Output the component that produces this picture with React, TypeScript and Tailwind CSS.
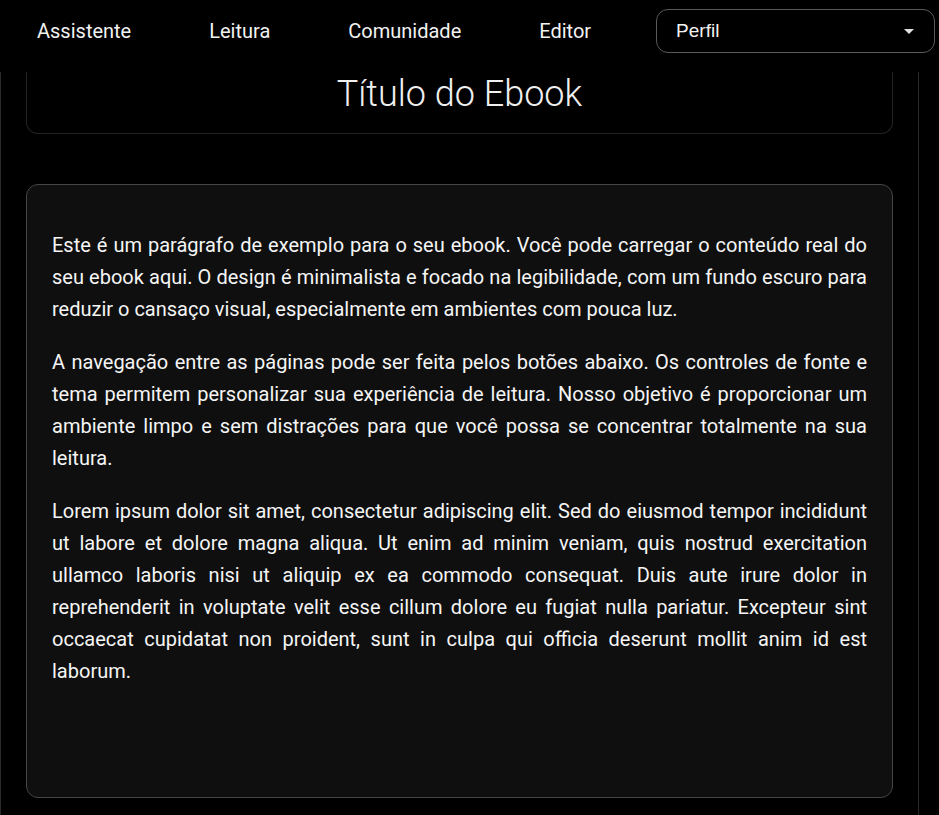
const NAV_LINKS = ["Assistente", "Leitura", "Comunidade", "Editor"];

const PARAGRAPHS = [
	"Este é um parágrafo de exemplo para o seu ebook. Você pode carregar o conteúdo real do seu ebook aqui. O design é minimalista e focado na legibilidade, com um fundo escuro para reduzir o cansaço visual, especialmente em ambientes com pouca luz.",
	"A navegação entre as páginas pode ser feita pelos botões abaixo. Os controles de fonte e tema permitem personalizar sua experiência de leitura. Nosso objetivo é proporcionar um ambiente limpo e sem distrações para que você possa se concentrar totalmente na sua leitura.",
	"Lorem ipsum dolor sit amet, consectetur adipiscing elit. Sed do eiusmod tempor incididunt ut labore et dolore magna aliqua. Ut enim ad minim veniam, quis nostrud exercitation ullamco laboris nisi ut aliquip ex ea commodo consequat. Duis aute irure dolor in reprehenderit in voluptate velit esse cillum dolore eu fugiat nulla pariatur. Excepteur sint occaecat cupidatat non proident, sunt in culpa qui officia deserunt mollit anim id est laborum.",
];

function Header() {
	return (
		<header className="h-[72px] bg-black flex items-start pt-[9px]">
			<nav className="flex items-center h-[44px] pl-[37px] gap-[78px]">
				{NAV_LINKS.map((label) => (
					<a key={label} className="text-[20px] font-normal text-[#f2f2f2]">
						{label}
					</a>
				))}
			</nav>
			<div className="ml-[65px] w-[279px] h-[44px] rounded-[12px] border border-[#5a5a5a] flex items-center justify-between pl-[19px] pr-[20px] font-['Liberation_Sans',sans-serif] text-[19px] text-[#f2f2f2]">
				<span>Perfil</span>
				<svg width="10" height="6" viewBox="0 0 10 6" className="mt-[1px]">
					<path d="M0 0 L10 0 L5 5 Z" fill="#e0e0e0" />
				</svg>
			</div>
		</header>
	);
}

export default function App() {
	return (
		<div className="min-h-[815px] bg-black font-['Roboto',sans-serif] overflow-hidden">
			<Header />
			<main className="w-[919px] border-x border-[#2a2a2a] px-[25px] pb-[40px]">
				<div className="h-[62px] border-x border-b border-[#232323] rounded-b-[12px] flex justify-center pt-[4px]">
					<h1 className="text-[36px] leading-[36px] font-light text-[#f0f0f0]">
						Título do Ebook
					</h1>
				</div>
				<article className="mt-[50px] w-[867px] h-[614px] bg-[#0f0f0f] border border-[#454545] rounded-[12px] px-[25px] pt-[44px]">
					{PARAGRAPHS.map((text, i) => (
						<p
							key={i}
							className="text-[20px] leading-[32px] font-normal text-[#f5f5f5] text-justify mb-[21px]"
						>
							{text}
						</p>
					))}
				</article>
			</main>
		</div>
	);
}
